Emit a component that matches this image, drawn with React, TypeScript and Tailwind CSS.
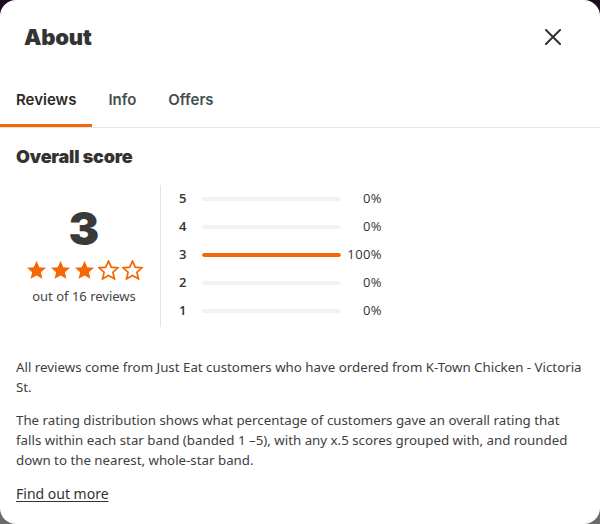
import React from "react";

const bands = [
  { label: "5", pct: 0 },
  { label: "4", pct: 0 },
  { label: "3", pct: 100 },
  { label: "2", pct: 0 },
  { label: "1", pct: 0 },
];

function Star({ filled }: { filled: boolean }) {
  return (
    <svg width="21" height="21" viewBox="0 0 24 24" aria-hidden="true">
      <path
        d="M12 1.2l3.2 7 7.6.7-5.75 5.05 1.7 7.55L12 17.6l-6.75 3.9 1.7-7.55L1.2 8.9l7.6-.7z"
        fill={filled ? "#f36805" : "#ffffff"}
        stroke="#f36805"
        strokeWidth={filled ? 0 : 2}
        strokeLinejoin="miter"
      />
    </svg>
  );
}

export default function App() {
  const heading = { fontFamily: "Inter, Lato, sans-serif" };
  const body = { fontFamily: "'Noto Sans', 'Open Sans', sans-serif" };

  return (
    <div className="h-[524px] w-[600px] bg-linear-to-b from-[#1c0c1e] to-[#6b6b6b]">
      <div className="flex h-full w-full flex-col overflow-hidden rounded-2xl bg-white text-[#3e3e3e]" style={body}>
        {/* header */}
        <div className="flex items-center justify-between pl-6 pr-[39px] pt-6">
          <h2 className="text-[22px] font-black leading-[26px] tracking-[-0.2px] text-[#333]" style={heading}>
            About
          </h2>
          <button aria-label="Close" className="flex h-4 w-4 items-center justify-center">
            <svg width="16" height="16" viewBox="0 0 16 16">
              <path d="M1 1l14 14M15 1L1 15" stroke="#333" strokeWidth="2" strokeLinecap="square" />
            </svg>
          </button>
        </div>

        {/* tabs */}
        <div className="mt-10 flex border-b border-[#e6e6e6]" style={heading}>
          <div className="border-b-[3px] border-[#f36805] px-4 pb-[14px] text-[15px] font-semibold leading-5 text-[#2a2a2a]">
            Reviews
          </div>
          <div className="px-4 pb-[17px] text-[15px] font-semibold leading-5 text-[#444d4f]">Info</div>
          <div className="px-4 pb-[17px] text-[15px] font-semibold leading-5 text-[#444d4f]">Offers</div>
        </div>

        <div className="px-4">
          <h3 className="mt-[17px] text-[18px] font-black leading-6 tracking-[-0.2px] text-[#333]" style={heading}>
            Overall score
          </h3>

          {/* score */}
          <div className="mt-[16px] flex h-[142px]">
            <div className="flex w-[136px] flex-col items-center justify-center">
              <div className="text-[46px] font-black leading-[44px] text-[#3a3a3a]" style={heading}>
                3
              </div>
              <div className="mt-[10px] flex gap-[3px]">
                {[0, 1, 2, 3, 4].map((i) => (
                  <Star key={i} filled={i < 3} />
                ))}
              </div>
              <div className="mt-[5px] text-[13px] leading-5 text-[#444]">out of 16 reviews</div>
            </div>
            <div className="ml-2 flex flex-col border-l border-[#e3e3e3] pl-[18px]" style={{ fontFamily: "'Open Sans', sans-serif" }}>
              {bands.map((b) => (
                <div key={b.label} className="flex h-7 items-center">
                  <span className="w-[23px] text-[13px] font-semibold text-[#333]">{b.label}</span>
                  <div className="h-1 w-[139px] overflow-hidden rounded-full bg-[#f5f2ee]">
                    <div className="h-full rounded-full bg-[#f36805]" style={{ width: `${b.pct}%` }} />
                  </div>
                  <span className="w-[41px] text-right text-[13px] tracking-[0.4px] text-[#333]">{b.pct}%</span>
                </div>
              ))}
            </div>
          </div>

          {/* copy */}
          <p className="mt-[30px] text-[13.3px] leading-5">
            All reviews come from Just Eat customers who have ordered from K-Town Chicken - Victoria St.
          </p>
          <p className="mt-[13px] text-[13.3px] leading-5">
            The rating distribution shows what percentage of customers gave an overall rating that falls within
            each star band (banded 1 –5), with any x.5 scores grouped with, and rounded down to the nearest,
            whole-star band.
          </p>
          <a href="#" className="mt-[14px] inline-block text-[14px] leading-5 text-[#333] underline underline-offset-2">
            Find out more
          </a>
        </div>
      </div>
    </div>
  );
}
